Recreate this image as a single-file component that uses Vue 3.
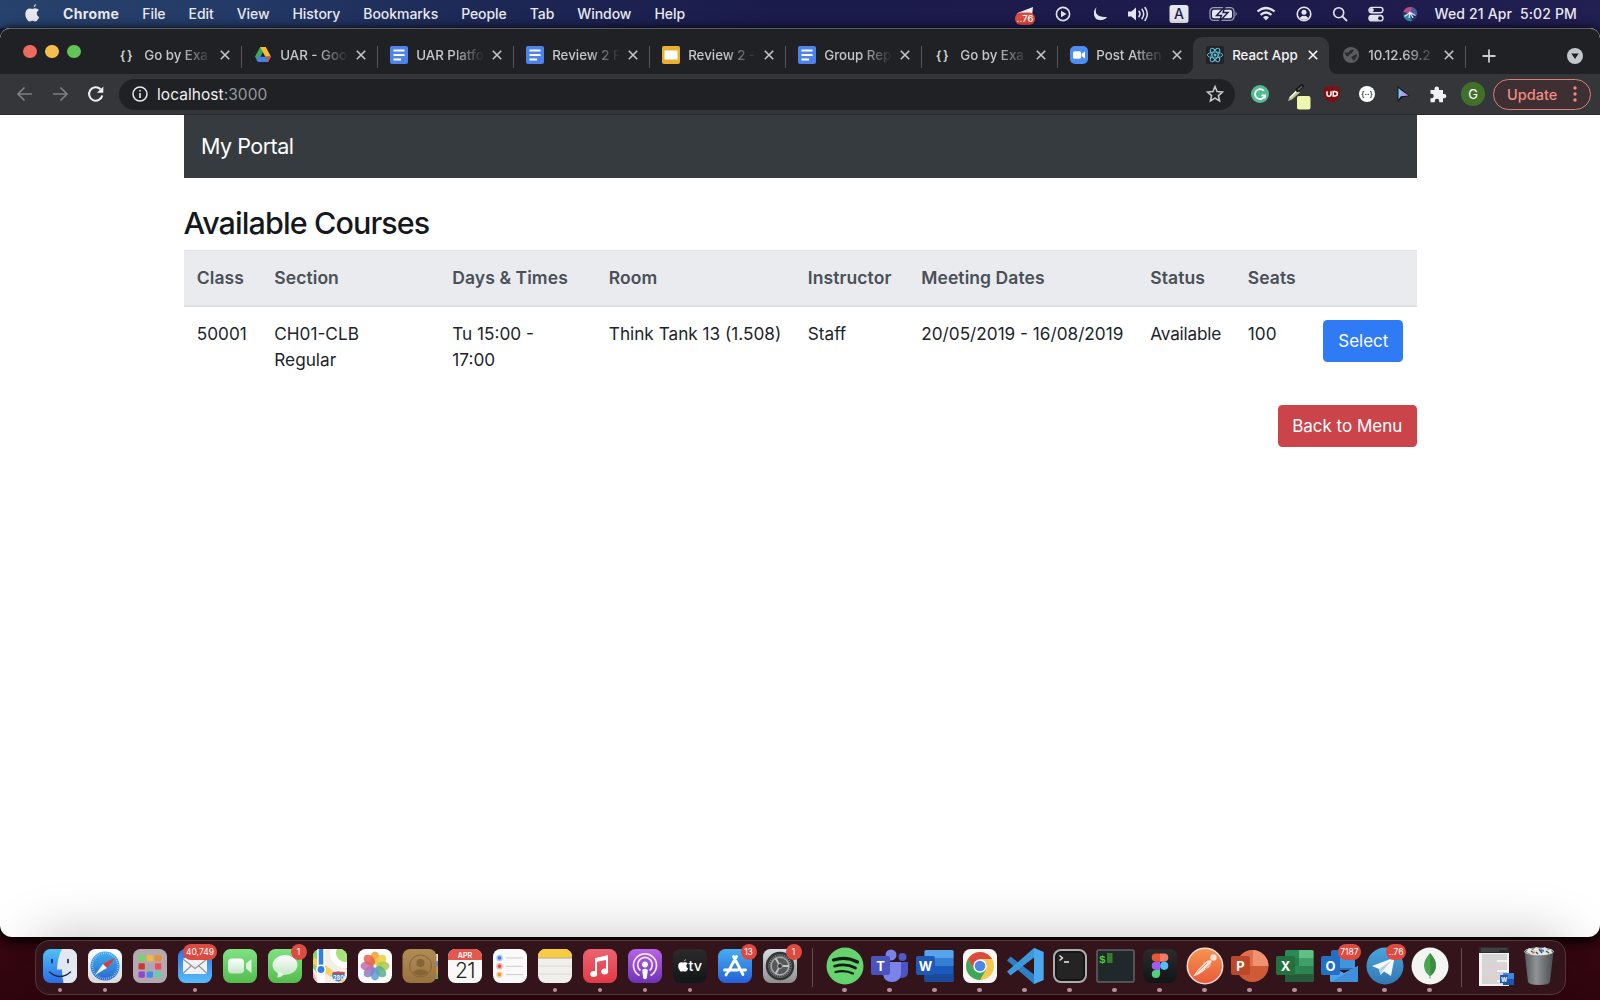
<script setup>
const menus = ['File', 'Edit', 'View', 'History', 'Bookmarks', 'People', 'Tab', 'Window', 'Help']

const statusIcons = [
  { w: 38, art: '<path d="M-7.500 -1L8 -7L7 2L-8 3Z" fill="#eee"/><rect x="-10" y="-1.500" width="20" height="12.500" rx="6" fill="#e04a3e"/><text x="0" y="8" font-size="9.500" fill="#fff" text-anchor="middle">..76</text>' },
  { w: 37, art: '<circle r="6.600" fill="none" stroke="#e6e6ee" stroke-width="1.600"/><path d="M-2 -3.300L3.500 0L-2 3.300Z" fill="#e6e6ee"/>' },
  { w: 37, art: '<path d="M-3.500 -6.800A7.300 7.300 0 1 0 7.200 3A7.500 7.500 0 0 1 -3.500 -6.800Z" fill="#e6e6ee"/><path d="M-3.500 -6.800Q-7.500 3 7.200 3Q2 8 -4 5Q-8 0 -3.500 -6.800Z" fill="#e6e6ee"/>' },
  { w: 39, art: '<path d="M-10 -2.400h3.400L-2 -6.400V6.400L-6.600 2.400H-10Z" fill="#e6e6ee"/><g fill="none" stroke="#e6e6ee" stroke-width="1.500" stroke-linecap="round"><path d="M1 -2.700Q3 0 1 2.700"/><path d="M4 -4.700Q7.400 0 4 4.700"/><path d="M7 -6.500Q11.700 0 7 6.500"/></g>' },
  { w: 43, art: '<rect x="-9.500" y="-9" width="19" height="18" rx="2.500" fill="#e6e6ee"/><text y="5" text-anchor="middle" font-size="14" fill="#1d1b4a">A</text>' },
  { w: 45, art: '<rect x="-13" y="-6.300" width="24" height="12.600" rx="3.600" fill="none" stroke="#9d9cb5" stroke-width="1.300"/><path d="M12.500 -2.400Q15 0 12.500 2.400Z" fill="#9d9cb5"/><rect x="-11" y="-4.300" width="20" height="8.600" rx="2" fill="#e6e6ee"/><path d="M2 -7.500L-6.500 1.500H-1.500L-3.500 7.500L5 -1.500H0Z" fill="#e6e6ee" stroke="#1d1b4a" stroke-width="1.400"/>' },
  { w: 42, art: '<g fill="none" stroke="#e6e6ee" stroke-width="2.200"><path d="M-8.500 -2.500Q0 -9.500 8.500 -2.500"/><path d="M-5.400 .8Q0 -3.800 5.400 .8"/></g><path d="M-3 3.300Q0 .8 3 3.300L0 6.500Z" fill="#e6e6ee"/>' },
  { w: 34, art: '<circle r="6.800" fill="none" stroke="#e6e6ee" stroke-width="1.600"/><circle cy="-1.800" r="2.500" fill="#e6e6ee"/><path d="M-4.600 4Q0 -.5 4.600 4Q0 8 -4.600 4Z" fill="#e6e6ee"/>' },
  { w: 37, art: '<circle cx="-1.300" cy="-1.300" r="5" fill="none" stroke="#e6e6ee" stroke-width="1.600"/><path d="M2.400 2.400L6.500 6.500" stroke="#e6e6ee" stroke-width="1.800" stroke-linecap="round"/>' },
  { w: 35, art: '<rect x="-7" y="-6.600" width="14" height="5.400" rx="2.700" fill="none" stroke="#e6e6ee" stroke-width="1.400"/><circle cx="-4.200" cy="-3.900" r="2" fill="#e6e6ee"/><rect x="-7.700" y=".8" width="15.400" height="6.800" rx="3.400" fill="#e6e6ee"/><circle cx="4.100" cy="4.200" r="2" fill="#1d1b4a"/>' },
  { w: 34, art: '<circle r="7.500" fill="#2a3263"/><path d="M-6.500 -2A7 7 0 0 1 3 -6.500L0 0Z" fill="#b04f86"/><path d="M3 -6.500A7 7 0 0 1 7 1L0 0Z" fill="#4a5aa8"/><path d="M-6.500 1A7 7 0 0 0 2 7L0 0Z" fill="#2f8a9c"/><path d="M-5.500 2.500L0 -1.500L5.500 1.500M-1 4L0 -1.500L3 4" stroke="#e9ecff" stroke-width="1.200" fill="none"/>' }
]

const braces = '<text y="4.500" font-size="12.500" font-weight="600" letter-spacing="1.500" text-anchor="middle" fill="#d5d5d5">{}</text>'
const docs = '<rect x="-9" y="-9" width="18" height="18" rx="2" fill="#4f83ec"/><path d="M-5.500 -4.500H5.500M-5.500 0H5.500M-5.500 4.500H2" stroke="#fff" stroke-width="2"/>'
const tabs = [
  { title: 'Go by Exa', icon: braces },
  { title: 'UAR - Goo', icon: '<path d="M-2.800 -8H2.800L0 -3L-5.200 6.500L-8 1.500Z" fill="#3da560"/><path d="M-2.800 -8H2.800L8 1.800H2.300Z" fill="#f7bf2d"/><path d="M-4.900 1.800H8L5.200 7H-5.200L-6.500 4.500Z" fill="#4680e8"/><path d="M3 1.800H8L5.200 7Z" fill="#dc4939"/>' },
  { title: 'UAR Platfo', icon: docs },
  { title: 'Review 2 F', icon: docs },
  { title: 'Review 2 -', icon: '<rect x="-9" y="-9" width="18" height="18" rx="2" fill="#eab131"/><rect x="-6.500" y="-4.500" width="13" height="9" fill="#fff"/>' },
  { title: 'Group Rep', icon: docs },
  { title: 'Go by Exa', icon: braces },
  { title: 'Post Atten', icon: '<rect x="-9" y="-9" width="18" height="18" rx="5" fill="#4f8df6"/><rect x="-6" y="-3.700" width="8" height="7.400" rx="1.500" fill="#fff"/><path d="M2.600 -1.200L6 -3.400V3.400L2.600 1.200Z" fill="#fff"/>' },
  { title: 'React App', active: true, icon: '<rect x="-9" y="-9" width="18" height="18" rx="2" fill="#202226"/><g fill="none" stroke="#5fb8d3" stroke-width="1"><ellipse rx="7.600" ry="3"/><ellipse rx="7.600" ry="3" transform="rotate(60)"/><ellipse rx="7.600" ry="3" transform="rotate(120)"/></g><circle r="1.500" fill="#5fb8d3"/>' },
  { title: '10.12.69.2', icon: '<circle r="8" fill="#5a5c60"/><path d="M-6.500 -3Q-3 -1 -1 -4.500Q1 -6 3 -5Q1 -1 -2 0Q-2 2 -5 1ZM0 2Q3 0 6 -1Q6 3 2.500 6Q1.500 3.500 0 2Z" fill="#2b2c30"/>' }
]

const extensions = [
  { w: 51, art: '<path d="M0 -7.500L2.100 -2.500L7.500 -2L3.400 1.600L4.600 7L0 4.100L-4.600 7L-3.400 1.600L-7.500 -2L-2.100 -2.500Z" fill="none" stroke="#c9cacc" stroke-width="1.500"/>' },
  { w: 38, art: '<circle r="9" fill="#52bd95"/><path d="M3.800 -3.300A5 5 0 1 0 4.900 1.400H1.500M5 1.200V4.500" fill="none" stroke="#fff" stroke-width="1.700"/>' },
  { w: 36, art: '<path d="M-9 7L-7.500 3L0 -4L3 -1.500L-5 5.500Z" fill="#b9c78a"/><path d="M-7 3.800L0 -3.500" stroke="#f5f8e0" stroke-width="1.500"/><path d="M.5 -4L5 -8" stroke="#17181a" stroke-width="4" stroke-linecap="round"/><path d="M1 -4L5 -7.500" stroke="#66686b" stroke-width="1.500"/><rect x="0" y="2" width="13.500" height="13.500" rx="2" fill="#edf6ae"/>' },
  { w: 35, art: '<path d="M0 -9Q4 -6.500 8 -6.500V0Q8 5 0 9Q-8 5 -8 0V-6.500Q-4 -6.500 0 -9Z" fill="#7d1111"/><path d="M-5 -2.800V0Q-5 2.300 -3 2.300T-1 0V-2.800M1.200 -2.600V2H2.700Q5.400 2 5.400 -.3T2.700 -2.600Z" fill="none" stroke="#fff" stroke-width="1.500"/>' },
  { w: 35, art: '<circle r="8" fill="#fff"/><text y="3" font-size="8" font-weight="500" fill="#222" text-anchor="middle">{··}</text>' },
  { w: 36, art: '<path d="M-5.500 -8L7 2L0 3L-5.500 8Z" fill="#111418"/><path d="M-4.500 -6L.5 -1.500L-4.500 5.500Z" fill="#79c9f2"/><path d="M-1.500 -3.300L5.500 1.500L-2 2.300Z" fill="#b69ae8"/>' },
  { w: 35, art: '<path d="M-7.500 -4H-3.500V-5.200A2.200 2.200 0 0 1 1 -5.200V-4H5V0H6.200A2.100 2.100 0 0 1 6.200 4.300H5V8.200H1.200V7A2.200 2.200 0 0 0 -3.200 7V8.200H-7.500V4.300H-6.500A2.200 2.200 0 0 0 -6.500 -.2H-7.500Z" fill="#f1f1f3"/>' },
  { w: 35, art: '<circle r="12" fill="#41702b"/><text y="4.600" font-size="13" fill="#fff" text-anchor="middle">G</text>' }
]

const course = { id: '50001', room: 'Think Tank 13 (1.508)', who: 'Staff', dates: '20/05/2019 - 16/08/2019', status: 'Available', seats: '100' }

const sq = (fill) => `<rect x="-17" y="-17" width="34" height="34" rx="7.500" fill="${fill}"/>`
const tile = (fill, letter) => `<rect x="-19" y="-10" width="19" height="19" rx="2" fill="${fill}"/><text x="-9.500" y="4.500" font-size="13" font-weight="700" fill="#fff" text-anchor="middle">${letter}</text>`
const petals = ['#f29a35', '#e8d13e', '#a9c850', '#5fae85', '#5d9fd8', '#8b7cc4', '#c26db0', '#e8604c']
  .map((c, i) => `<ellipse cy="-8" rx="4.600" ry="6.500" fill="${c}" opacity=".85" transform="rotate(${i * 45})"/>`).join('')
const pads = ['#6fd66b', '#f2b83b', '#ee8f36', '#cf3a30', '#a6a9ad', '#ee4b63', '#9146d0', '#3f8df0', '#5fd1a5']
  .map((c, i) => `<rect x="${-11.5 + (i % 3) * 8.2}" y="${-11 + Math.floor(i / 3) * 8.2}" width="6.400" height="6.400" rx="1.300" fill="${c}"/>`).join('')
const apple = 'M3 -5.500Q3 -8 5.300 -9.200Q5.400 -6.600 3 -5.500M1.800 -4Q4 -5.200 6.300 -4.300Q7.500 -3.900 8 -3Q5.900 -1.500 6 .6Q6.200 3 8.500 4Q7.500 6.700 6 8Q4.800 8.800 3.600 8.200Q1.800 7.500 0 8.200Q-1.400 8.900 -2.500 7.900Q-6 4 -5.300 -.2Q-4.500 -4.400 -.6 -4.500Q.8 -4.300 1.800 -4Z'

const dockMain = [
  { run: 1, art: sq('url(#gFinder)') + '<path d="M2 -17H9.500A7.500 7.500 0 0 1 17 -9.500V9.500A7.500 7.500 0 0 1 9.500 17H3.500Q2 11 2 3.500H-3Q-2.500 -9 2 -17Z" fill="#e3e8f0"/><path d="M-10.500 6Q0 15 10.500 6" fill="none" stroke="#1c2b45" stroke-width="1.500" stroke-linecap="round"/><path d="M-8 -6.500V-3.500M8 -6.500V-3.500" stroke="#1c2b45" stroke-width="1.700" stroke-linecap="round"/>' },
  { run: 1, art: sq('url(#gWhite)') + '<circle r="14.500" fill="url(#gSafari)"/><circle r="12.800" fill="none" stroke="#bfe0f8" stroke-width="1.800" stroke-dasharray=".6 1.400"/><path d="M10.500 -8.500L2 2L-2 -2Z" fill="#e2392e"/><path d="M-10 9L2 2L-2 -2Z" fill="#f2f2f2"/>' },
  { art: sq('#b4a9b0') + pads },
  { run: 1, badge: '40,749', art: sq('url(#gMail)') + '<rect x="-12" y="-8" width="24" height="16" rx="1.500" fill="#f0f2f5"/><path d="M-12 -7L0 2.500L12 -7M-12 7.500L-4 0M12 7.500L4 0" fill="none" stroke="#8d949c" stroke-width="1.100"/>' },
  { art: sq('url(#gGreen)') + '<rect x="-12" y="-7.500" width="16" height="15" rx="4" fill="url(#gPale)"/><path d="M6 -2.500L11.500 -7V7L6 2.500Z" fill="#dcf3dd"/>' },
  { badge: '1', art: sq('url(#gGreen)') + '<ellipse cy="-1" rx="12.500" ry="10" fill="url(#gPale)"/><path d="M-8 5Q-6.500 9 -8 11.500Q-3.500 11.500 -1 8Z" fill="#e3f1e3"/>' },
  { art: '<clipPath id="cMap">' + sq('#fff') + '</clipPath><g clip-path="url(#cMap)"><rect x="-17" y="-17" width="34" height="34" fill="#f2efe6"/><path d="M-17 -17H-12V8L-17 2Z" fill="#8fd070"/><path d="M0 -17H17V4Z" fill="#a9e27a"/><circle cx="15" cy="-13" r="12" fill="none" stroke="#fff" stroke-width="6"/><path d="M-17 -6L17 19" stroke="#f7cf54" stroke-width="6"/><path d="M-17 5L-12 17H-17Z" fill="#f3b6c8"/><path d="M-9 -17V17" stroke="#fff" stroke-width="8"/><path d="M-9 -17V1" stroke="#2c80e8" stroke-width="4.500"/></g><circle cx="-9" cy="3.500" r="5" fill="#fff"/><circle cx="-9" cy="3.500" r="3.400" fill="#2c80e8"/><path d="M2 6Q8 4 15 6Q16 14 8.500 16Q0 14 2 6Z" fill="#3d79c8" stroke="#fff" stroke-width=".7"/><text x="8.500" y="13.500" font-size="5.500" font-weight="700" fill="#fff" text-anchor="middle">280</text><path d="M3 7H14.500" stroke="#d94b40" stroke-width="2"/>' },
  { art: sq('#fcfcfc') + petals },
  { art: '<path d="M13 -12H18V-5H13Z" fill="#e8e4dc"/><path d="M13 -5H18V1H13Z" fill="#4f9fe0"/><path d="M13 1H18V7H13Z" fill="#ee9436"/><path d="M13 7H18V13H13Z" fill="#59bd5c"/>' + '<rect x="-17.500" y="-17" width="34" height="34" rx="7.500" fill="url(#gBrown)"/><g transform="translate(.5)"><circle r="11" fill="none" stroke="#876437" stroke-width="1"/><circle cy="-3" r="4" fill="#876437"/><path d="M-8 6.500Q0 0 8 6.500Q0 13 -8 6.500Z" fill="#876437"/></g>' },
  { art: sq('#f9f9f7') + '<path d="M-17 -6V-9.500A7.500 7.500 0 0 1 -9.500 -17H9.500A7.500 7.500 0 0 1 17 -9.500V-6Z" fill="#e2574e"/><text y="-8.300" font-size="7.200" font-weight="600" fill="#fff" text-anchor="middle">APR</text><text y="12" font-size="21" font-weight="300" fill="#222" text-anchor="middle" letter-spacing="-.5">21</text>' },
  { art: sq('#fafafa') + '<path d="M-4 -8H13M-4 .3H13M-4 8.600H13" stroke="#ccc" stroke-width="1"/><g stroke-width="1.400"><circle cx="-10.500" cy="-8" r="2.500" fill="#357ae8" stroke="#a9c6f4"/><circle cx="-10.500" cy=".3" r="2.500" fill="#e04b3f" stroke="#f0b0a8"/><circle cx="-10.500" cy="8.600" r="2.500" fill="#ee9436" stroke="#f6cf9f"/></g>' },
  { run: 1, art: sq('#f0efeb') + '<path d="M-17 -8V-9.500A7.500 7.500 0 0 1 -9.500 -17H9.500A7.500 7.500 0 0 1 17 -9.500V-8Z" fill="#f8cb42"/><path d="M-17 -8H17" stroke="#b5aa89" stroke-width="1"/><path d="M-17 0H17M-17 8H17" stroke="#dbdad5" stroke-width="1"/>' },
  { run: 1, art: sq('url(#gMusic)') + '<path d="M-4 8V-7L7 -9.500V5" fill="none" stroke="#fff" stroke-width="2"/><path d="M-4 -8L8 -10.700V-6.500L-4 -4Z" fill="#fff"/><ellipse cx="-6.300" cy="8" rx="3.500" ry="2.900" fill="#fff"/><ellipse cx="4.700" cy="5.500" rx="3.500" ry="2.900" fill="#fff"/>' },
  { run: 1, art: sq('url(#gPod)') + '<g fill="none" stroke="#f3e8fb" stroke-width="1.700"><path d="M-5.500 9.500A11.500 11.500 0 1 1 5.500 9.500"/><path d="M-4.500 4.500A7.300 7.300 0 1 1 4.500 4.500"/></g><circle cy="-1.500" r="2.900" fill="#fff"/><path d="M-2.800 4Q0 1.500 2.800 4L1.800 12Q0 14.500 -1.800 12Z" fill="#fff"/>' },
  { run: 1, art: sq('url(#gTv)') + `<path d="${apple}" fill="#fff" transform="translate(-8,-.5) scale(.72)"/><text x="-1.500" y="5" font-size="14.500" font-weight="500" fill="#fff">tv</text>` },
  { badge: '13', art: sq('url(#gStore)') + '<g stroke="#fff" stroke-width="2.800" stroke-linecap="round"><path d="M1.500 -9.500L-7 6M-1.500 -9.500L8 8.500M-10.500 4H3M8 4H10.500M-8.500 8L-9 9"/></g>' },
  { badge: '1', art: sq('url(#gSet)') + '<circle r="13" fill="#7a7b7d" stroke="#333435" stroke-width="2.500"/><circle r="10.700" fill="none" stroke="#333435" stroke-width="1.400" stroke-dasharray="1.200 1"/><circle r="8.700" fill="#56585a" stroke="#aaacad" stroke-width="1.200"/><path d="M0 0L-4.500 -8M0 0H9M0 0L-4.500 8" stroke="#c2c4c5" stroke-width="1.800"/><circle r="2.500" fill="#3a3b3c" stroke="#aaa"/>' }
]

const dockApps = [
  { run: 1, art: '<circle r="18.500" fill="#65d36e"/><g fill="none" stroke="#121e14" stroke-linecap="round"><path d="M-11.500 -6Q1 -10 12.500 -4" stroke-width="3.200"/><path d="M-10.500 .2Q1 -3.200 10.500 2" stroke-width="2.700"/><path d="M-9.500 6Q0 3.500 8 7.500" stroke-width="2.200"/></g>' },
  { run: 1, art: '<circle cx="1" cy="-11" r="5.500" fill="#7b83eb"/><circle cx="12.500" cy="-9" r="4" fill="#5059c9"/><path d="M8 -4H18V6Q18 12 10 12Z" fill="#4c56c0"/><path d="M-7 -4H11V8Q10 16 2 16Q-6 16 -7 8Z" fill="#7b83eb"/>' + tile('#4b53bc', 'T') },
  { run: 1, art: '<rect x="-10.500" y="-16" width="29" height="32" rx="1.500" fill="#185abd"/><path d="M-10.500 -14.500Q-10.500 -16 -9 -16H17Q18.500 -16 18.500 -14.500V-8H-10.500Z" fill="#57a4ec"/><path d="M-10.500 -8H18.500V0H-10.500Z" fill="#3180d4"/><path d="M-10.500 8H18.500V14.500Q18.500 16 17 16H-9Q-10.500 16 -10.500 14.500Z" fill="#1b4a9c"/>' + tile('#2058b5', 'W') },
  { run: 1, art: sq('#f6f6f6') + '<circle r="14" fill="#f4c84e"/><path d="M-12.100 -7A14 14 0 0 1 12.100 -7H0L-6 3.500Z" fill="#db4a3e"/><path d="M-12.100 -7A14 14 0 0 0 0 14L6 3.500L-6 3.500Z" fill="#3ea75b"/><circle r="6.700" fill="#fff"/><circle r="5.300" fill="#4c86ea"/>' },
  { run: 1, art: '<path d="M9 -18L18.500 -14V14L9 18L-18 -5.500L-14.500 -9.500L9 8.500Z" fill="#2f7fc4"/><path d="M9 -18V-8.500L-14.500 9.500L-18 5.500Z" fill="#3c99dc"/><path d="M9 -18L18.500 -14V14L9 18Z" fill="#4aa9ee"/>' },
  { run: 1, art: '<rect x="-16" y="-16" width="32" height="32" rx="7" fill="#242424" stroke="#a9adad" stroke-width="2"/><rect x="-14" y="-14" width="28" height="28" rx="5" fill="none" stroke="#080808"/><path d="M-10.500 -10.500L-7.500 -8L-10.500 -5.500M-6 -4H-1" fill="none" stroke="#eee" stroke-width="1.300"/>' },
  { run: 1, art: '<rect x="-18" y="-16" width="37" height="32" rx="1" fill="#20282c" stroke="#77858a" stroke-width="1"/><text x="-16" y="-3.500" font-size="11" font-weight="700" font-family="Liberation Mono, monospace" fill="#45d332">$</text><path d="M-8 -13H-2.500V-3H-8Z" fill="#387c2b"/>' },
  { run: 1, art: sq('url(#gTv)') + '<path d="M0 -12.500H-4.200A4.100 4.100 0 0 0 -4.200 -4.300H0Z" fill="#ea5730"/><path d="M0 -12.500H4.200A4.100 4.100 0 0 1 4.200 -4.300H0Z" fill="#f07b6b"/><path d="M0 -4.300H-4.200A4.100 4.100 0 0 0 -4.200 3.900H0Z" fill="#a05bf4"/><circle cx="4.200" cy="-.2" r="4.100" fill="#55bdf8"/><path d="M0 3.900H-4.200A4.100 4.100 0 1 0 0 8Z" fill="#53cf83"/>' },
  { run: 1, art: '<circle r="17.700" fill="url(#gPost)" stroke="#f3dcd3" stroke-width="1.500"/><path d="M-12 10.500Q-8 4 -2.500 -1Q1.500 -6.500 6.500 -5.500Q7 .5 1 3Q-5 8.500 -12 10.500Z" fill="#f6e4d8"/><circle cx="8.500" cy="-8.500" r="3.200" fill="#f6e4d8"/><path d="M-8 6.500L2 -3M0 3L9 -5" stroke="#e0794f" stroke-width=".8"/>' },
  { run: 1, art: '<circle cx="2.500" r="16" fill="#ce5a36"/><path d="M2.500 -16A16 16 0 0 1 18.500 0H2.500Z" fill="#f0916f"/><path d="M2.500 -16A16 16 0 0 0 -13.500 0H2.500Z" fill="#e0704c"/>' + tile('#bd4729', 'P') },
  { run: 1, art: '<rect x="-10" y="-16" width="28.500" height="32" rx="1.500" fill="#2a8a53"/><path d="M4 -16H17Q18.500 -16 18.500 -14.500V-8H4Z" fill="#5dc184"/><path d="M-10 -8H4V0H-10Z" fill="#2a7d4b"/><path d="M4 -8H18.500V0H4Z" fill="#40a068"/><path d="M4 0H18.500V8H4Z" fill="#2f8151"/><path d="M-10 8H18.500V14.500Q18.500 16 17 16H-8.500Q-10 16 -10 14.500Z" fill="#265c3b"/>' + tile('#24713f', 'X') },
  { run: 1, badge: '7187', art: '<path d="M-9 -14Q-9 -16 -7 -16H13Q15 -16 15 -14V4H-9Z" fill="#2c6cbd"/><path d="M-1 -8H15V2H-1Z" fill="#3f96df"/><path d="M-10 0L4 7L18 0V14.500Q18 16 16.500 16H-8.500Q-10 16 -10 14.500Z" fill="#4ea3e8"/><path d="M-9 16L18 0V14.500Q18 16 16.500 16Z" fill="#3f8fdb"/>' + tile('#246fc6', 'O') },
  { run: 1, badge: '..76', art: '<circle r="18.500" fill="url(#gTele)"/><path d="M-13 0L9.500 -8.500L6 10L-1 5.500L-4.500 9L-6 3Z" fill="#f4f8fb"/><path d="M-6 3L6 -5L-2.500 5L-4.500 9Z" fill="#bccfdd"/>' },
  { run: 1, art: '<circle r="18.500" fill="#f4f4f3"/><path d="M0 -13Q6.300 -6 6 0Q5.500 6 .5 10V12.500H-.5V10Q-5.500 6 -6 0Q-6.300 -6 0 -13Z" fill="#4ba650"/><path d="M0 -13Q6.300 -6 6 0Q5.500 6 .5 10Z" fill="#3a8c41"/>' }
]

const lines = Array.from({ length: 15 }, (_, i) => `<path d="M-12 ${-11 + i * 2}H${i % 5 === 3 ? 3 : 13}" stroke="${i === 6 || i === 11 ? '#dd8f8f' : '#a8a8a8'}" stroke-width=".8"/>`).join('')
const dockFiles = [
  { art: '<rect x="-15" y="-19" width="30" height="39" fill="#f3f3f3"/><path d="M-15 -19H15V-13H-15Z" fill="#2a2b2d"/><path d="M-13 -17H13M-13 -15H5" stroke="#777" stroke-width=".6"/>' + lines + '<rect x="9" y="7" width="11" height="12" fill="#3c86dc"/><path d="M9 13H20V19H9Z" fill="#1d57b5"/><rect x="6" y="9" width="8" height="8" fill="#2058b5"/><text x="10" y="15.500" font-size="6" font-weight="700" fill="#fff" text-anchor="middle">W</text>' },
  { art: '<path d="M-14.500 -15H14.500L11 16Q10 19 0 19Q-10 19 -11 16Z" fill="url(#gTrash)"/><ellipse cy="-14.500" rx="14.500" ry="3.500" fill="#5d6163" stroke="#b7babb" stroke-width="1"/><path d="M-13 -14L-10 -18L-6 -16L-3 -19L2 -17L6 -19L9 -16L12 -17L13 -13L6 -11H-6Z" fill="#e5e6e6"/><path d="M-8 -15L-5 -13M0 -17L3 -13M7 -15L10 -13M-3 -14L-1 -12" stroke="#4d5254" stroke-width="1.500"/><path d="M2 -16L5 -15" stroke="#3f86c9" stroke-width="2"/><path d="M-7 -13L-4 -14" stroke="#d9774a" stroke-width="1.500"/>' }
]
const dockGroups = [dockMain, dockApps, dockFiles]
</script>

<template>
  <div class="screen">
    <svg class="defs" width="0" height="0">
      <defs>
        <linearGradient id="gFinder" x2="0" y2="1"><stop stop-color="#4fc0f7" /><stop offset="1" stop-color="#2e6be6" /></linearGradient>
        <linearGradient id="gWhite" x2="0" y2="1"><stop stop-color="#fff" /><stop offset="1" stop-color="#d9d9db" /></linearGradient>
        <linearGradient id="gSafari" x2="0" y2="1"><stop stop-color="#3fb0f0" /><stop offset="1" stop-color="#2b67cf" /></linearGradient>
        <linearGradient id="gMail" x2="0" y2="1"><stop stop-color="#2f6fe8" /><stop offset="1" stop-color="#58bdf8" /></linearGradient>
        <linearGradient id="gGreen" x2="0" y2="1"><stop stop-color="#7fe281" /><stop offset="1" stop-color="#54bd4d" /></linearGradient>
        <linearGradient id="gPale" x2="0" y2="1"><stop stop-color="#fff" /><stop offset="1" stop-color="#c5e6c6" /></linearGradient>
        <linearGradient id="gBrown" x2="0" y2="1"><stop stop-color="#b08c55" /><stop offset="1" stop-color="#99733f" /></linearGradient>
        <linearGradient id="gMusic" x2="0" y2="1"><stop stop-color="#ee6272" /><stop offset="1" stop-color="#e23a44" /></linearGradient>
        <linearGradient id="gPod" x2="0" y2="1"><stop stop-color="#b763e6" /><stop offset="1" stop-color="#7033b5" /></linearGradient>
        <linearGradient id="gTv" x2="0" y2="1"><stop stop-color="#2b2a2c" /><stop offset="1" stop-color="#111616" /></linearGradient>
        <linearGradient id="gStore" x2="0" y2="1"><stop stop-color="#45aef2" /><stop offset="1" stop-color="#2660d8" /></linearGradient>
        <linearGradient id="gSet" x2="0" y2="1"><stop stop-color="#d5e0e6" /><stop offset="1" stop-color="#8d8e8d" /></linearGradient>
        <linearGradient id="gPost" x2="0" y2="1"><stop stop-color="#f4954f" /><stop offset="1" stop-color="#ea5a39" /></linearGradient>
        <linearGradient id="gTele" x2="0" y2="1"><stop stop-color="#4ba4dc" /><stop offset="1" stop-color="#3078b4" /></linearGradient>
        <linearGradient id="gTrash"><stop stop-color="#55595b" /><stop offset=".4" stop-color="#8f9395" /><stop offset="1" stop-color="#4a4d4f" /></linearGradient>
      </defs>
    </svg>

    <header class="menubar">
      <svg class="apple" width="20" height="20" viewBox="-10 -10 20 20"><path :d="apple" fill="#e6e8ee" transform="translate(-1.300,0)" /></svg>
      <nav class="menus">
        <b>Chrome</b>
        <span v-for="m in menus" :key="m">{{ m }}</span>
      </nav>
      <div class="status">
        <span v-for="(s, i) in statusIcons" :key="i" class="slot" :style="{ width: s.w + 'px' }">
          <svg width="30" height="24" viewBox="-15 -12 30 24" v-html="s.art" />
        </span>
      </div>
      <span class="clock">Wed 21 Apr&nbsp; 5:02 PM</span>
    </header>

    <section class="window">
      <div class="tabstrip">
        <div class="lights"><i class="red" /><i class="amber" /><i class="green" /></div>
        <div v-for="(t, i) in tabs" :key="i" class="tab" :class="{ active: t.active, bare: i === 7 }">
          <svg width="20" height="20" viewBox="-10 -10 20 20" v-html="t.icon" />
          <span class="title">{{ t.title }}</span>
          <svg class="close" width="10" height="10" viewBox="0 0 10 10"><path d="M.8 .8L9.200 9.200M9.200 .8L.8 9.200" /></svg>
        </div>
        <svg class="plus" width="14" height="14" viewBox="0 0 14 14"><path d="M7 .5V13.500M.5 7H13.500" /></svg>
        <svg class="more" width="16" height="16" viewBox="0 0 16 16"><circle cx="8" cy="8" r="8" fill="#c3c6cb" /><path d="M4.300 5.500H11.700L8 11Z" fill="#202124" /></svg>
      </div>

      <div class="toolbar">
        <svg class="nav" width="106" height="20" viewBox="0 0 106 20" fill="none">
          <g stroke="#7d7e82" stroke-width="1.700"><path d="M18 10H4M10.500 3.500L4 10L10.500 16.500" /><path d="M39 10H53M46.500 3.500L53 10L46.500 16.500" /></g>
          <path d="M86.500 5.200A6.700 6.700 0 1 0 88.300 11.500" stroke="#f0f0f1" stroke-width="2" /><path d="M89.300 2.500V8.800H83Z" fill="#f0f0f1" />
        </svg>
        <div class="omnibox">
          <svg width="16" height="16" viewBox="0 0 16 16"><circle cx="8" cy="8" r="7" fill="none" stroke="#e8e8ea" stroke-width="1.500" /><path d="M8 7V12M8 4V5.600" stroke="#e8e8ea" stroke-width="1.600" /></svg>
          <span class="url">localhost<em>:3000</em></span>
        </div>
        <div class="extensions">
          <span v-for="(e, i) in extensions" :key="i" class="slot" :style="{ width: e.w + 'px' }">
            <svg width="32" height="32" viewBox="-16 -16 32 32" v-html="e.art" />
          </span>
        </div>
        <div class="update">Update<svg width="4" height="16" viewBox="0 0 4 16" fill="#f28b82"><circle cx="2" cy="2" r="1.700" /><circle cx="2" cy="8" r="1.700" /><circle cx="2" cy="14" r="1.700" /></svg></div>
      </div>

      <main class="page">
        <div class="navbar">My Portal</div>
        <h1>Available Courses</h1>
        <table>
          <colgroup><col class="c1"><col class="c2"><col class="c3"><col class="c4"><col class="c5"><col class="c6"><col class="c7"><col class="c8"><col></colgroup>
          <thead>
            <tr><th>Class</th><th>Section</th><th>Days &amp; Times</th><th>Room</th><th>Instructor</th><th>Meeting Dates</th><th>Status</th><th>Seats</th><th /></tr>
          </thead>
          <tbody>
            <tr>
              <td>{{ course.id }}</td><td>CH01-CLB<br>Regular</td><td>Tu 15:00 -<br>17:00</td><td>{{ course.room }}</td><td>{{ course.who }}</td>
              <td>{{ course.dates }}</td><td class="snug">{{ course.status }}</td><td>{{ course.seats }}</td><td class="pick"><button class="btn select">Select</button></td>
            </tr>
          </tbody>
        </table>
        <div class="actions"><button class="btn back">Back to Menu</button></div>
      </main>
    </section>

    <footer class="dock">
      <template v-for="(g, gi) in dockGroups" :key="gi">
        <span v-if="gi" class="divider" />
        <div v-for="(d, i) in g" :key="i" class="app">
          <svg width="42" height="42" viewBox="-21 -21 42 42" v-html="d.art" />
          <i v-if="d.run" class="dot" />
          <span v-if="d.badge" class="badge">{{ d.badge }}</span>
        </div>
      </template>
    </footer>
  </div>
</template>

<style>
body { margin: 0; background: #2f060e; }
</style>

<style scoped>
.screen { position: relative; display: flex; flex-direction: column; width: 1600px; height: 1000px; overflow: hidden; font-family: Inter, "Liberation Sans", sans-serif; background: linear-gradient(#1c2350 0, #1c2350 60px, #14030a 400px, #3a0811 940px, #30050d); }
.defs { position: absolute; }
svg { display: block; flex: none; overflow: visible; }
.menubar { display: flex; align-items: center; height: 28px; padding-bottom: 2px; box-sizing: border-box; background: linear-gradient(90deg, #27426c, #243b68 220px, #1d2855 480px, #1b1b4b 780px, #1d1b4c 1300px, #221f52); color: #e9e9ef; font-size: 14px; font-weight: 500; white-space: nowrap; }
.apple { margin-left: 21.500px; }
.menus { display: flex; gap: 23px; margin-left: 21.500px; width: 943px; letter-spacing: -.06px; }
.menus b { font-weight: 700; letter-spacing: .35px; }
.status { display: flex; margin-top: 1px; }
.slot { display: flex; justify-content: center; align-items: center; flex: none; }
.clock { margin-left: 7.500px; letter-spacing: .15px; }
.window { position: relative; display: flex; flex-direction: column; height: 908.500px; box-sizing: border-box; border-radius: 10px 10px 12px 12px; overflow: hidden; background: #fff; box-shadow: 0 2px 9px 1px #000, 0 6px 18px rgba(0, 0, 0, .5); }
.tabstrip { display: flex; height: 46px; box-sizing: border-box; border-top: 1px solid #5b5d59; border-radius: 10px 10px 0 0; background: #202124; align-items: flex-end; position: relative; }
.lights { display: flex; gap: 8.400px; width: 82.200px; padding-left: 23px; height: 29.500px; }
.lights i { width: 13.600px; height: 13.600px; border-radius: 50%; }
.red { background: #ed6a5e; }
.amber { background: #f4be4f; }
.green { background: #61c454; }
.tab { position: relative; flex: none; width: 136px; height: 37px; box-sizing: border-box; padding-left: 12px; padding-bottom: 1px; display: flex; align-items: center; color: #c4c6ca; }
.tab::after { content: ""; position: absolute; right: -1px; top: 9px; width: 1px; height: 22px; background: #55575b; }
.tab.bare::after, .tab.active::after { display: none; }
.title { width: 68px; margin-left: 7px; white-space: nowrap; font-size: 13.300px; font-weight: 500; letter-spacing: 0; mask-image: linear-gradient(90deg, #000 55%, transparent 100%); }
.close { margin-left: 7.500px; }
.close path { stroke: #c4c6ca; stroke-width: 1.600; }
.active { background: #35363a; border-radius: 9px 9px 0 0; color: #f3f3f4; }
.active::before { content: ""; position: absolute; z-index: 1; left: -9px; right: -9px; bottom: 0; height: 9px; background: radial-gradient(circle at 0 0, transparent 9px, #35363a 9.500px) left / 9px 9px no-repeat, radial-gradient(circle at 100% 0, transparent 9px, #35363a 9.500px) right / 9px 9px no-repeat; }
.active .title { mask-image: none; }
.active .close path { stroke: #fff; }
.plus { margin: 0 0 11.500px 17px; }
.plus path { stroke: #c9cbcf; stroke-width: 1.800; }
.more { margin: 0 17px 10.500px auto; }
.toolbar { display: flex; align-items: center; height: 41px; flex: none; box-sizing: border-box; border-bottom: 1px solid #292a2d; background: #35363a; }
.nav { margin-left: 14px; margin-right: -1px; }
.omnibox { display: flex; align-items: center; width: 1116px; height: 31px; box-sizing: border-box; padding-left: 13px; border-radius: 16px; background: #202124; flex: none; }
.url { margin-left: 9px; font-size: 15.500px; color: #f1f1f2; letter-spacing: .05px; }
.url em { font-style: normal; color: #96999d; }
.extensions { display: flex; margin-left: -45.500px; }
.update { display: flex; align-items: center; justify-content: space-between; width: 98px; height: 31px; margin-left: 2px; padding: 0 13px 0 13.500px; box-sizing: border-box; border: 1.500px solid #d97f78; border-radius: 16px; background: #3d2f32; color: #f28b82; font-size: 14.500px; font-weight: 500; flex: none; }
.page { flex: 1; width: 1233px; margin: 0 auto; color: #212529; font-size: 17.200px; line-height: 26.500px; }
.navbar { height: 62.500px; box-sizing: border-box; padding: 0 17.500px; line-height: 62px; background: #363b40; color: #fff; font-size: 21.500px; letter-spacing: -.5px; }
h1 { margin: 29.500px 0 11px; font-size: 30.500px; line-height: 32px; font-weight: 500; color: #15181c; letter-spacing: -.9px; }
table { width: 100%; table-layout: fixed; border-collapse: separate; border-spacing: 0; white-space: nowrap; }
.c1 { width: 77.500px; } .c2 { width: 178px; } .c3 { width: 156.500px; } .c4 { width: 199px; } .c5 { width: 113.500px; } .c6 { width: 229px; } .c7 { width: 97.500px; } .c8 { width: 75.500px; }
th { height: 56.500px; box-sizing: border-box; padding: 1px 13.300px 0; text-align: left; font-size: 17.500px; letter-spacing: .08px; font-weight: 600; color: #495057; background: #e9ebef; border-top: 1px solid #dee2e6; border-bottom: 2px solid #dee2e6; }
td { padding: 14.300px 13.300px 0; vertical-align: top; }
td.snug { letter-spacing: -.2px; }
td.pick { padding-top: 13.500px; }
.btn { font: inherit; font-size: 17px; display: block; height: 42px; padding: 1px 0 0; border: 0; border-radius: 4.400px; color: #fff; }
.select { width: 80px; margin-left: auto; background: #2f7bf6; }
.back { width: 138.500px; background: #cb444a; }
.actions { display: flex; justify-content: flex-end; margin-top: 31px; }
.dock { position: absolute; left: 34.500px; top: 940px; width: 1531px; height: 54.500px; box-sizing: border-box; padding-left: 2px; display: flex; border: 1px solid #56343a; border-radius: 14px; background: #34141b; box-shadow: 0 0 55px rgba(0, 0, 0, .27); }
.app { position: relative; width: 45px; flex: none; display: flex; flex-direction: column; align-items: center; padding-top: 3.500px; }
.dot { width: 4.600px; height: 4.600px; margin-top: 1px; border-radius: 50%; background: #b98e98; }
.badge { position: absolute; right: 1px; top: 3px; min-width: 16px; height: 16px; padding: 0 2.500px; box-sizing: border-box; border-radius: 8px; background: #dd4a40; color: #fff; font-size: 8.500px; line-height: 16px; text-align: center; }
.divider { width: 1px; height: 39px; margin: 7px 9.250px; background: #6a4a50; flex: none; }
</style>
